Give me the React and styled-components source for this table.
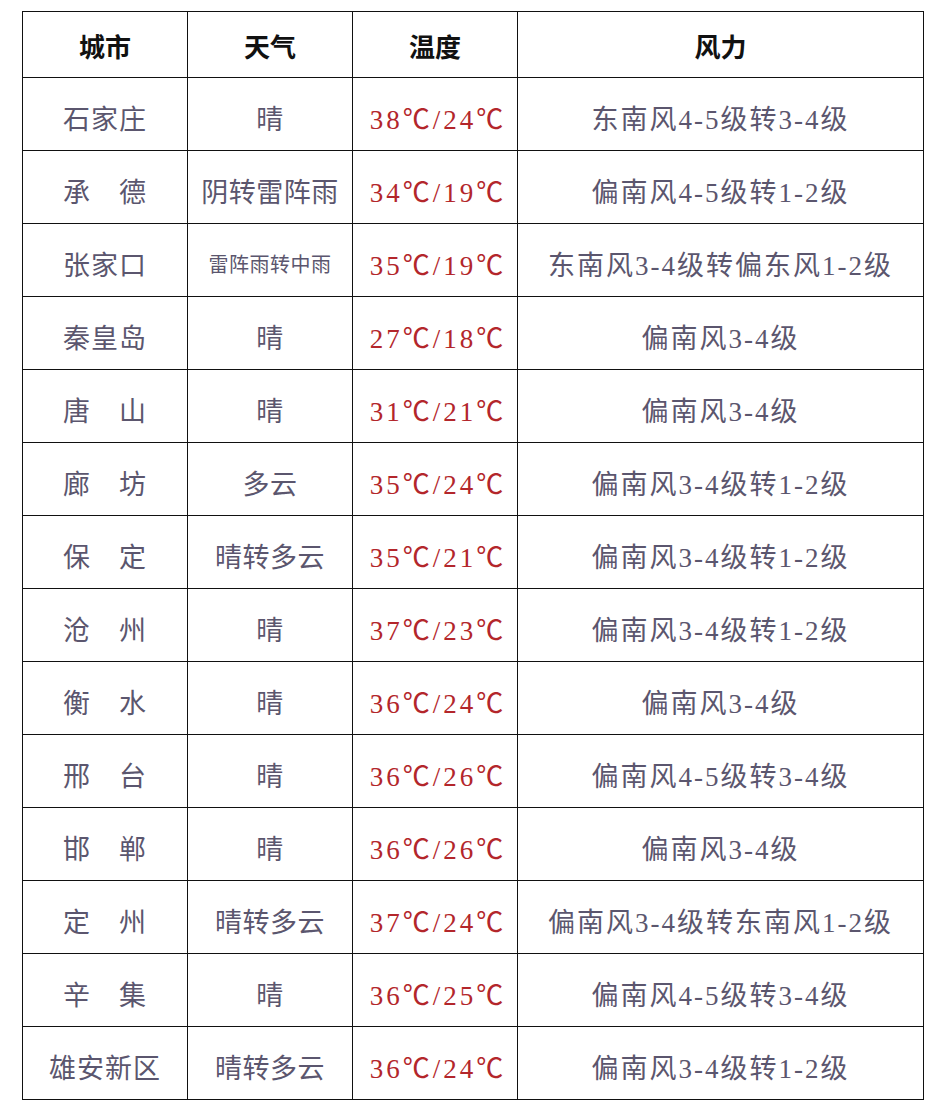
import React from "react";
import styled, { createGlobalStyle } from "styled-components";

const Global = createGlobalStyle`
  html, body { margin: 0; padding: 0; background: #fff; }
  body { font-family: "Liberation Serif", "Noto Sans CJK SC", serif; }
`;

const Page = styled.div`
  padding: 11px 0 0 22px;
  background: #fff;
`;

const Table = styled.table`
  border-collapse: collapse;
  table-layout: fixed;
  width: 901px;
  border: 1.5px solid #111;
`;

const Col = styled.col`
  width: ${(p) => p.$w}px;
`;

const HeadCell = styled.th`
  height: 64px;
  border: 1.5px solid #111;
  font-family: "Liberation Serif", "Noto Sans CJK SC", serif;
  font-size: 26px;
  font-weight: 700;
  color: #111;
  text-align: center;
  vertical-align: middle;
  padding: 0;
  padding-top: 1px;
`;

const Cell = styled.td`
  height: 66px;
  border: 1.5px solid #111;
  font-family: "Liberation Serif", "Noto Sans CJK SC", serif;
  font-size: ${(p) => (p.$small ? "20px" : "27px")};
  letter-spacing: ${(p) => p.$spacing || "0.5px"};
  color: ${(p) => (p.$hot ? "#b3262b" : "#5b566e")};
  text-align: center;
  vertical-align: middle;
  white-space: nowrap;
  padding: 6px 0 0 ${(p) => p.$indent || "0px"};
`;

const rows = [
  ["石家庄", "晴", "38℃/24℃", "东南风4-5级转3-4级"],
  ["承\u3000德", "阴转雷阵雨", "34℃/19℃", "偏南风4-5级转1-2级"],
  ["张家口", "雷阵雨转中雨", "35℃/19℃", "东南风3-4级转偏东风1-2级"],
  ["秦皇岛", "晴", "27℃/18℃", "偏南风3-4级"],
  ["唐\u3000山", "晴", "31℃/21℃", "偏南风3-4级"],
  ["廊\u3000坊", "多云", "35℃/24℃", "偏南风3-4级转1-2级"],
  ["保\u3000定", "晴转多云", "35℃/21℃", "偏南风3-4级转1-2级"],
  ["沧\u3000州", "晴", "37℃/23℃", "偏南风3-4级转1-2级"],
  ["衡\u3000水", "晴", "36℃/24℃", "偏南风3-4级"],
  ["邢\u3000台", "晴", "36℃/26℃", "偏南风4-5级转3-4级"],
  ["邯\u3000郸", "晴", "36℃/26℃", "偏南风3-4级"],
  ["定\u3000州", "晴转多云", "37℃/24℃", "偏南风3-4级转东南风1-2级"],
  ["辛\u3000集", "晴", "36℃/25℃", "偏南风4-5级转3-4级"],
  ["雄安新区", "晴转多云", "36℃/24℃", "偏南风3-4级转1-2级"],
];

export default function App() {
  return (
    <Page>
      <Global />
      <Table>
        <colgroup>
          <Col $w={165} />
          <Col $w={165} />
          <Col $w={165} />
          <Col $w={406} />
        </colgroup>
        <thead>
          <tr>
            <HeadCell>城市</HeadCell>
            <HeadCell>天气</HeadCell>
            <HeadCell>温度</HeadCell>
            <HeadCell>风力</HeadCell>
          </tr>
        </thead>
        <tbody>
          {rows.map((r, i) => (
            <tr key={i}>
              <Cell $spacing="1px">{r[0]}</Cell>
              <Cell $small={r[1].length > 5} $spacing="0.5px">{r[1]}</Cell>
              <Cell $hot $spacing="3px" $indent="6px">{r[2]}</Cell>
              <Cell $spacing="2px">{r[3]}</Cell>
            </tr>
          ))}
        </tbody>
      </Table>
    </Page>
  );
}
